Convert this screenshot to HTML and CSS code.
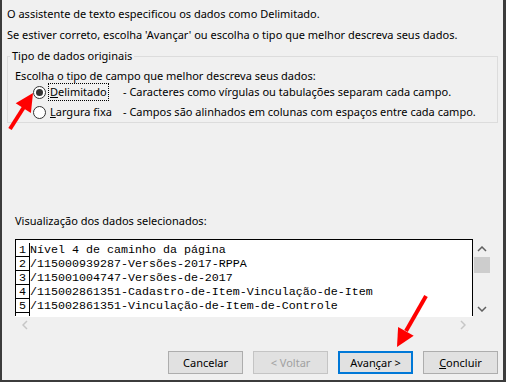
FILE: index.html
```html
<!DOCTYPE html>
<html lang="pt-br">
<head>
  <meta charset="UTF-8" />
  <title>Assistente de importação de texto</title>
  <link rel="stylesheet" href="styles.css">
</head>

<body>
  <div class="dialog">
    <p class="intro">O assistente de texto especificou os dados como Delimitado.</p>
    <p class="intro">Se estiver correto, escolha 'Avançar' ou escolha o tipo que melhor descreva seus dados.</p>

    <fieldset class="group">
      <legend>Tipo de dados originais</legend>
      <p class="group-hint">Escolha o tipo de campo que melhor descreva seus dados:</p>

      <div class="option">
        <span class="radio checked"></span>
        <span class="opt-label"><span class="focus"><u>D</u>elimitado</span></span>
        <span class="opt-desc">- Caracteres como vírgulas ou tabulações separam cada campo.</span>
      </div>
      <div class="option">
        <span class="radio"></span>
        <span class="opt-label"><span class="nofocus"><u>L</u>argura fixa</span></span>
        <span class="opt-desc">- Campos são alinhados em colunas com espaços entre cada campo.</span>
      </div>
    </fieldset>

    <p class="preview-title">Visualização dos dados selecionados:</p>

    <div class="preview">
      <div class="listing">
        <div class="row"><span class="num">1</span><span class="cell">Nível 4 de caminho da página</span></div>
        <div class="row"><span class="num">2</span><span class="cell">/115000939287-Versões-2017-RPPA</span></div>
        <div class="row"><span class="num">3</span><span class="cell">/115001004747-Versões-de-2017</span></div>
        <div class="row"><span class="num">4</span><span class="cell">/115002861351-Cadastro-de-Item-Vinculação-de-Item</span></div>
        <div class="row"><span class="num">5</span><span class="cell">/115002861351-Vinculação-de-Item-de-Controle</span></div>
        <div class="row"><span class="num"></span><span class="cell"></span></div>
      </div>
      <div class="vscroll">
        <svg class="chev" width="10" height="6" viewBox="0 0 10 6"><polyline points="1,5 5,1 9,5" /></svg>
        <div class="thumb"></div>
        <svg class="chev chev-down" width="10" height="6" viewBox="0 0 10 6"><polyline points="1,1 5,5 9,1" /></svg>
      </div>
      <div class="hscroll">
        <svg class="chev-off" width="6" height="10" viewBox="0 0 6 10"><polyline points="5,1 1,5 5,9" /></svg>
        <svg class="chev-off" width="6" height="10" viewBox="0 0 6 10"><polyline points="1,1 5,5 1,9" /></svg>
      </div>
      <div class="corner"></div>
    </div>

    <div class="buttons">
      <button type="button">Cancelar</button>
      <button type="button" disabled>&lt; Voltar</button>
      <button type="button" class="btn-primary">Avan<u>ç</u>ar &gt;</button>
      <button type="button"><u>C</u>oncluir</button>
    </div>

    <!-- setas vermelhas de anotação -->
    <svg class="marks" viewBox="0 0 506 382" width="506" height="382">
      <line x1="10" y1="129" x2="24" y2="107" />
      <polygon points="33,93 15.7,103.3 30.9,113.1" />
      <line x1="426" y1="296" x2="406" y2="331" />
      <polygon points="397,347 398.1,327 413.7,335.8" />
    </svg>
  </div>
</body>
</html>
```

FILE: styles.css
```css
* {
  margin: 0;
  padding: 0;
  box-sizing: border-box;
}

body {
  background: #f0f0f0;
}

.dialog {
  position: relative;
  height: 382px;
  background: #f0f0f0;
  border-left: 2px solid #3c3c3c;
  border-right: 3px solid #3c3c3c;
  border-bottom: 2px solid #3c3c3c;
  padding: 6px 5px 0 5px;
  font: 11px/16px "Noto Sans", sans-serif;
  color: #000;
}

.intro + .intro {
  margin-top: 5px;
}

.group {
  margin-top: 5px;
  padding: 0 0 2px 7px;
  border: 1px solid #dcdcdc;
  min-width: 0;
}

.group legend {
  margin-left: -5px;
  padding: 0 2px;
}

.group-hint {
  margin-top: 4px;
}

.option {
  display: flex;
  align-items: center;
  height: 16px;
  margin-left: 18px;
}

.option + .option {
  margin-top: 4px;
}

.radio {
  position: relative;
  width: 13px;
  height: 13px;
  border: 1px solid #333;
  border-radius: 50%;
  background: #fff;
  flex: none;
}

.radio.checked::after {
  content: "";
  position: absolute;
  left: 2px;
  top: 2px;
  width: 7px;
  height: 7px;
  border-radius: 50%;
  background: #333;
}

.opt-label {
  flex: none;
  width: 75px;
  margin-left: 2px;
}

.focus,
.nofocus {
  display: inline-block;
  padding: 0 1px;
  border: 1px dotted transparent;
}

.focus {
  border-color: #000;
}

.opt-desc {
  white-space: nowrap;
}

.preview-title {
  margin: 90px 0 0 8px;
}

.preview {
  display: grid;
  grid-template-columns: 458px 18px;
  grid-template-rows: 77px 16px;
  margin: 10px 7px 0 8px;
}

.listing {
  background: #fff;
  border: 1px solid #000;
  border-bottom: 0;
  padding-top: 3px;
  overflow: hidden;
  font: 11.67px/14px "Liberation Mono", "Courier New", monospace;
}

.row {
  display: flex;
  height: 14px;
}

.num {
  flex: none;
  width: 14px;
  border-right: 1px solid #000;
  border-bottom: 1px solid #000;
  text-align: center;
}

.cell {
  white-space: pre;
}

.vscroll {
  display: flex;
  flex-direction: column;
  align-items: center;
  padding-top: 7px;
}

.chev polyline,
.chev-off polyline {
  fill: none;
  stroke: #606060;
  stroke-width: 1.5;
}

.chev-off polyline {
  stroke: #c6c6c6;
}

.thumb {
  width: 16px;
  height: 16px;
  margin-top: 5px;
  background: #cdcdcd;
}

.chev-down {
  margin-top: auto;
  margin-bottom: 4px;
}

.hscroll {
  display: flex;
  justify-content: space-between;
  align-items: center;
  padding: 0 7px;
  border-top: 1px solid #fff;
}

.buttons {
  display: flex;
  justify-content: flex-end;
  gap: 10px;
  margin-top: 19px;
}

.buttons button {
  width: 75px;
  height: 23px;
  font: 11px/16px "Noto Sans", sans-serif;
  color: #000;
  background: #e1e1e1;
  border: 1px solid #adadad;
}

.buttons button:disabled {
  color: #a0a0a0;
  background: #e1e1e1;
  border-color: #c4c4c4;
}

.buttons .btn-primary {
  border: 2px solid #0078d7;
}

.marks {
  position: absolute;
  left: -2px;
  top: 0;
  pointer-events: none;
}

.marks line {
  stroke: #ff0000;
  stroke-width: 4;
}

.marks polygon {
  fill: #ff0000;
}
```
